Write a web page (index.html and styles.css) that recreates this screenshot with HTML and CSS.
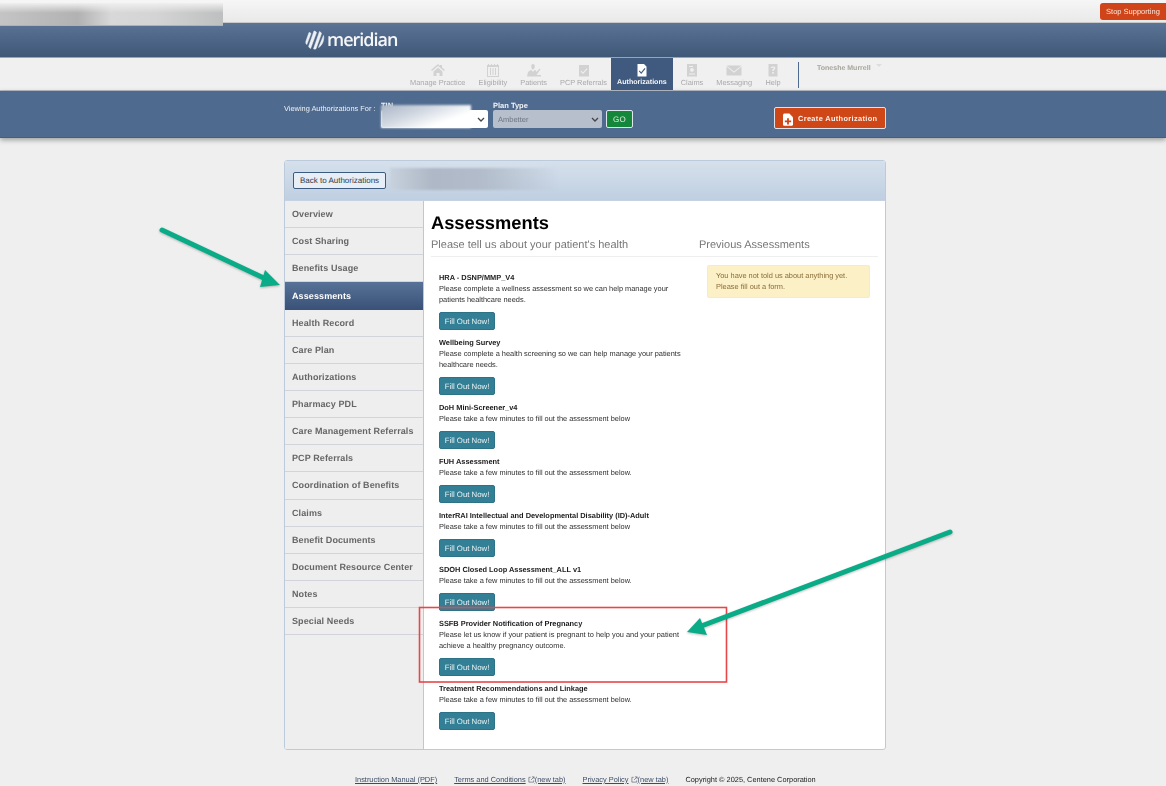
FILE: index.html
```html
<!DOCTYPE html>
<html lang="en">
<head>
<meta charset="utf-8">
<title>Assessments</title>
<link rel="stylesheet" href="styles.css">
</head>
<body>
<div class="page">
  <div class="topbar"><button class="stop">Stop Supporting</button></div>
  <div class="smudge smudge-top"></div>
  <header class="brand">
    <div class="logo">
      <svg class="logo-mark" viewBox="0 0 20 20" aria-hidden="true"><path d="M4 2.500 1 11c-.6 1.800 0 3 .8 3.600L6 3.500C5.500 2.800 4.700 2.400 4 2.500ZM9 1 3.600 16.500c.4 1 1.200 1.700 2 2.100L11.500 2.500C11 1.500 10 1 9 1ZM14.500 1.500 8.500 18.800c1 .5 1.800.4 2.500 0L16.500 3.500c-.4-1-1.100-1.700-2-2ZM18.500 5.500 13.500 17.500c1.500-.6 3.300-2.500 4.500-5.500.8-2.300 1-4.800.5-6.500Z" fill="#eef1f4" stroke="#eef1f4" stroke-width=".5"/></svg>
      <span class="logo-text">meridian</span>
    </div>
  </header>
  <nav class="mainnav">
    <a class="nav-item"><svg class="nav-icon" viewBox="0 0 16 14"><path d="M8 1 1 7l1 1 6-5 6 5 1-1-3-2.500V2h-2v1ZM3.500 8.500 8 4.800l4.500 3.700V13H9.500V10h-3v3h-3Z"/></svg>Manage Practice</a>
    <a class="nav-item"><svg class="nav-icon" viewBox="0 0 16 14"><path d="M3 1h1v1h2V1h1v1h2V1h1v1h2V1h1v1h1v12H2V2h1Zm0 3v9h10V4Zm2 1h1v7H5Zm2.500 0h1v7h-1Zm2.500 0h1v7h-1Z"/></svg>Eligibility</a>
    <a class="nav-item"><svg class="nav-icon" viewBox="0 0 16 14"><path d="M7 1c1 0 1.800.9 1.800 2.300S8 6.500 7 6.500 5.200 4.700 5.200 3.300 6 1 7 1ZM4 7.500l1.500-.5L7 9l1.500-2 1.500.5.500 1.500 3-3.500 1 .8L10.500 12H15v1.500H1L2 9Z"/></svg>Patients</a>
    <a class="nav-item"><svg class="nav-icon" viewBox="0 0 16 14"><path d="M3 2h10v11.500H3Zm1.500 6.500 2.500 2.500 4.500-5-.8-.7L7 9.500 5.300 7.800Z"/></svg>PCP Referrals</a>
    <a class="nav-item nav-active"><svg class="nav-icon" viewBox="0 0 16 14"><path d="M3.500 1H10l2.500 2.500V13.500h-9Zm2 6.500L4.800 8.300 7.200 11 11.500 5.800l-.9-.7-3.400 4.200Z"/></svg>Authorizations</a>
    <a class="nav-item"><svg class="nav-icon" viewBox="0 0 16 14"><path d="M3 1h10v12.500H3Zm2 2v1h4V3Zm0 7.500v1h6v-1ZM8 5A1.900 1.900 0 1 0 8 8.800 1.900 1.900 0 0 0 8 5Z"/></svg>Claims</a>
    <a class="nav-item"><svg class="nav-icon" viewBox="0 0 16 14"><path d="M.5 2.500h15L8 8.500ZM.5 3.500V12.500h15V3.500L8 9.800Z"/></svg>Messaging</a>
    <a class="nav-item"><svg class="nav-icon" viewBox="0 0 16 14"><path d="M3.500 1h9v12.500h-9Zm3.700 8v1.800h1.600V9Zm-1.500-4h1.400c0-.7 1.800-.7 1.800 0 0 .8-1.700 1-1.700 3h1.400c0-1.500 1.700-1.500 1.700-3.100 0-1.900-4.600-1.900-4.600.1Z"/></svg>Help</a>
    <span class="nav-sep"></span>
    <span class="user">Toneshe Murrell<i class="caret"></i></span>
  </nav>
  <div class="subbar">
    <div class="wrap subbar-row">
      <span class="viewing">Viewing Authorizations For :</span>
      <label class="field field-tin"><span class="field-label">TIN</span>
        <select class="select"><option></option></select>
        <span class="smudge smudge-tin"></span>
      </label>
      <label class="field field-plan"><span class="field-label">Plan Type</span>
        <select class="select select-off" disabled><option>Ambetter</option></select>
      </label>
      <button class="go">GO</button>
      <button class="create"><svg class="create-icon" viewBox="0 0 11 14"><path d="M0 1.500 1 .5h6l4 4v8.500l-1 1H1l-1-1Z" fill="#fff"/><path d="M4.500 5.500h2v2.500H9v2H6.500V12.500h-2V10H2V8h2.500Z" fill="#cf4717"/></svg>Create Authorization</button>
    </div>
  </div>
  <main class="wrap card">
    <div class="card-head">
      <button class="back">Back to Authorizations</button>
      <span class="smudge smudge-head"></span>
    </div>
    <div class="card-body">
      <ul class="side">
        <li class="side-item">Overview</li>
        <li class="side-item">Cost Sharing</li>
        <li class="side-item">Benefits Usage</li>
        <li class="side-item side-active">Assessments</li>
        <li class="side-item">Health Record</li>
        <li class="side-item">Care Plan</li>
        <li class="side-item">Authorizations</li>
        <li class="side-item">Pharmacy PDL</li>
        <li class="side-item">Care Management Referrals</li>
        <li class="side-item">PCP Referrals</li>
        <li class="side-item">Coordination of Benefits</li>
        <li class="side-item">Claims</li>
        <li class="side-item">Benefit Documents</li>
        <li class="side-item">Document Resource Center</li>
        <li class="side-item">Notes</li>
        <li class="side-item">Special Needs</li>
      </ul>
      <section class="content">
        <h1 class="title">Assessments</h1>
        <div class="subheads">
          <h2 class="subhead subhead-left">Please tell us about your patient's health</h2>
          <h2 class="subhead">Previous Assessments</h2>
        </div>
        <div class="columns">
          <div class="forms">
            <article class="form-item"><h3 class="form-name">HRA - DSNP/MMP_V4</h3><p class="form-desc">Please complete a wellness assessment so we can help manage your patients healthcare needs.</p><button class="fill">Fill Out Now!</button></article>
            <article class="form-item"><h3 class="form-name">Wellbeing Survey</h3><p class="form-desc">Please complete a health screening so we can help manage your patients healthcare needs.</p><button class="fill">Fill Out Now!</button></article>
            <article class="form-item"><h3 class="form-name">DoH Mini-Screener_v4</h3><p class="form-desc">Please take a few minutes to fill out the assessment below</p><button class="fill">Fill Out Now!</button></article>
            <article class="form-item"><h3 class="form-name">FUH Assessment</h3><p class="form-desc">Please take a few minutes to fill out the assessment below.</p><button class="fill">Fill Out Now!</button></article>
            <article class="form-item"><h3 class="form-name">InterRAI Intellectual and Developmental Disability (ID)-Adult</h3><p class="form-desc">Please take a few minutes to fill out the assessment below</p><button class="fill">Fill Out Now!</button></article>
            <article class="form-item"><h3 class="form-name">SDOH Closed Loop Assessment_ALL v1</h3><p class="form-desc">Please take a few minutes to fill out the assessment below.</p><button class="fill">Fill Out Now!</button></article>
            <article class="form-item"><h3 class="form-name">SSFB Provider Notification of Pregnancy</h3><p class="form-desc">Please let us know if your patient is pregnant to help you and your patient achieve a healthy pregnancy outcome.</p><button class="fill">Fill Out Now!</button></article>
            <article class="form-item"><h3 class="form-name">Treatment Recommendations and Linkage</h3><p class="form-desc">Please take a few minutes to fill out the assessment below.</p><button class="fill">Fill Out Now!</button></article>
          </div>
          <aside class="previous"><div class="alert">You have not told us about anything yet.<br>Please fill out a form.</div></aside>
        </div>
      </section>
    </div>
  </main>
  <footer class="foot">
    <a class="foot-link">Instruction Manual (PDF)</a>
    <span class="foot-ext"><a class="foot-link">Terms and Conditions</a> <svg class="ext" viewBox="0 0 8 8"><path d="M3 1.500H1v5.500h5.500V5M4.500 1h2.500v2.500M7 1 3.500 4.500" fill="none" stroke="#667" stroke-width=".8"/></svg><a class="foot-link">(new tab)</a></span>
    <span class="foot-ext"><a class="foot-link">Privacy Policy</a> <svg class="ext" viewBox="0 0 8 8"><path d="M3 1.500H1v5.500h5.500V5M4.500 1h2.500v2.500M7 1 3.500 4.500" fill="none" stroke="#667" stroke-width=".8"/></svg><a class="foot-link">(new tab)</a></span>
    <span>Copyright © 2025, Centene Corporation</span>
  </footer>
  <svg class="notes" viewBox="0 0 1166 786" aria-hidden="true">
    <rect x="419.500" y="607.500" width="307" height="74.500" fill="none" stroke="#e8474a" stroke-width="1.600"/>
    <g class="arrows">
      <path d="M162 230 268 280" stroke="#0aab87" stroke-width="5" stroke-linecap="round"/>
      <path d="M280 285 265 270 260 287Z" fill="#0aab87"/>
      <path d="M950 532 696 628" stroke="#0aab87" stroke-width="5" stroke-linecap="round"/>
      <path d="M687 632 700 618 707 635Z" fill="#0aab87"/>
    </g>
  </svg>
</div>
</body>
</html>
```

FILE: styles.css
```css
* { box-sizing: border-box; }
html, body { margin: 0; padding: 0; }
body {
  background: #efefef;
  font-family: "Liberation Sans", Arial, sans-serif;
  color: #222;
  overflow: hidden;
  text-rendering: geometricPrecision;
}
button, select { font-family: inherit; text-rendering: inherit; }
.page {
  position: relative;
  width: 1166px;
  height: 786px;
  overflow: hidden;
  filter: blur(0.3px);
}
.wrap { width: 602px; margin-left: 284px; }

.smudge {
  position: absolute;
  filter: blur(1px);
}
.smudge-top {
  left: 0; top: 3px; width: 223px; height: 23px;
  background:
    linear-gradient(#efefef 0, rgba(239,239,239,0) 45%),
    linear-gradient(90deg, #c4c4c4 0, #b2b2b2 35%, #d8d8d8 50%, #d4d4d4 70%, #bebfc0 100%);
  border-bottom: 1px solid #aeb2b8;
  filter: none;
  z-index: 3;
}
.topbar {
  height: 23px;
  display: flex;
  justify-content: flex-end;
  align-items: flex-start;
  padding-top: 3px;
  background: linear-gradient(#f6f6f6, #e9e9e9);
  border-bottom: 1px solid #c9c9c9;
}
.stop {
  width: 66px; height: 17px;
  border: 0;
  border-radius: 3px 0 0 3px;
  padding: 0;
  background: #cf4418;
  color: #fbe4da;
  font-size: 7.500px;
  white-space: nowrap;
}
.brand {
  height: 34px;
  background: linear-gradient(#5b7495, #3f5878);
  padding-left: 305px;
  display: flex;
  align-items: center;
}
.logo { display: flex; align-items: center; gap: 2px; }
.logo-mark { width: 20px; height: 20px; display: block; }
.logo-text {
  color: #f4f6f8;
  font-family: "Open Sans", sans-serif;
  font-size: 18px;
  font-weight: 600;
  line-height: 20px;
  letter-spacing: -1px;
}
.mainnav {
  height: 34px;
  background: #f0f0f0;
  border-top: 1px solid #94a6bb;
  border-bottom: 1px solid #b5bdc7;
  padding-left: 403.500px;
  display: flex;
  align-items: stretch;
}
.nav-item {
  display: flex;
  flex-direction: column;
  align-items: center;
  justify-content: flex-start;
  gap: 1px;
  padding: 5px 6.500px 0;
  color: #a9a9a9;
  font-size: 7.400px;
  line-height: 9px;
  white-space: nowrap;
}
.nav-icon { width: 16px; height: 14px; fill: #d2d2d2; display: block; }
.nav-active {
  background: #3f5a7e;
  color: #f4f6f9;
  font-weight: bold;
  padding: 5px 6px 0;
  margin: 0 1.500px 0 -2.500px;
  font-size: 7.100px;
}
.nav-active .nav-icon { fill: #fff; }
.nav-sep {
  width: 1px;
  height: 26px;
  margin: 4px 0 0 10.500px;
  background: #4f6a8f;
}
.user {
  margin: 6px 0 0 18px;
  color: #a8a49c;
  font-size: 7px;
  line-height: 9px;
  font-weight: bold;
  white-space: nowrap;
}
.caret {
  display: inline-block;
  margin: 0 0 3px 5px;
  border: 3px solid transparent;
  border-top-color: #ddd;
  border-bottom: 0;
}
.subbar {
  height: 47px;
  background: #4f6a8f;
  box-shadow: 0 2px 5px rgba(0,0,0,.35);
  border-bottom: 1px solid #445e82;
}
.subbar-row {
  height: 47px;
  display: flex;
  align-items: flex-start;
  color: #fff;
}
.viewing {
  font-size: 7.400px;
  line-height: 10px;
  margin-top: 13px;
  width: 97px;
  white-space: nowrap;
  color: #eef1f5;
}
.field { position: relative; display: flex; flex-direction: column; margin-top: 9px; }
.field-label { font-size: 7.500px; line-height: 12px; height: 10px; font-weight: bold; color: #f1f3f6; }
.field-tin { width: 107px; }
.field-plan { width: 109px; margin-left: 5px; }
.select {
  appearance: none;
  width: 100%;
  height: 18px;
  border: 0;
  border-radius: 2px;
  background: #fff url("data:image/svg+xml,%3Csvg xmlns='http://www.w3.org/2000/svg' width='8' height='5'%3E%3Cpath d='M1 1l3 3 3-3' fill='none' stroke='%23444' stroke-width='1.300'/%3E%3C/svg%3E") no-repeat right 3px center;
  font-size: 7.500px;
  padding: 0 0 0 5px;
  margin: 0;
}
.select-off { background-color: #b6bfcb; color: #6d7682; opacity: 1; }
.smudge-tin {
  left: 0; top: 5px; width: 90px; height: 23px;
  background: linear-gradient(160deg, #aab6c6 0, #cfd6e0 35%, #fff 72%);
}
.go {
  width: 27px; height: 18px;
  margin: 19px 0 0 4px;
  padding: 0;
  background: #15873a;
  color: #e2f0e4;
  border: 1.500px solid #dfe7ee;
  border-radius: 2px;
  font-size: 8px;
  letter-spacing: .4px;
}
.create {
  display: flex;
  align-items: center;
  gap: 5px;
  width: 112px; height: 22px;
  margin: 16px 0 0 auto;
  padding: 0 0 0 8px;
  background: #cf4717;
  color: #fbeee8;
  border: 1px solid #dbe3ec;
  border-radius: 2px;
  font-size: 7.400px;
  font-weight: bold;
  letter-spacing: .35px;
  white-space: nowrap;
}
.create-icon { width: 10px; height: 13px; margin-top: 2px; flex: none; }
.card {
  margin-top: 22px;
  height: 590px;
  border: 1px solid #bccbdc;
  border-radius: 3px;
  overflow: hidden;
  display: flex;
  flex-direction: column;
  background: #fff;
}
.card-head {
  position: relative;
  height: 40px;
  flex: none;
  padding: 11px 0 0 8px;
  background: linear-gradient(#d6e0ec, #bfcfe1);
  border-bottom: 1px solid #c5d2e2;
}
.back {
  display: block;
  width: 93px; height: 17px;
  padding: 0;
  background: #e8eef6;
  border: 1px solid #3d5a80;
  border-radius: 2px;
  color: #2f3d50;
  font-size: 8px;
  white-space: nowrap;
}
.smudge-head {
  left: 105px; top: 7px; width: 168px; height: 22px;
  background: linear-gradient(90deg, #c8d2de 0, #aeb8c6 25%, #b2bcca 55%, rgba(198,209,222,0) 100%);
}
.card-body { flex: 1; display: flex; min-height: 0; }
.side {
  width: 139px;
  flex: none;
  margin: 0;
  padding: 0;
  list-style: none;
  background: #eeeeee;
  border-right: 1px solid #b9c8da;
}
.side-item {
  height: 27.070px;
  padding-left: 7px;
  border-bottom: 1px solid #d1d5db;
  color: #666;
  font-size: 9px;
  font-weight: bold;
  line-height: 26px;
  letter-spacing: .1px;
  white-space: nowrap;
}
.side-active {
  height: 27.900px;
  line-height: 28px;
  background: linear-gradient(#587297, #3a5278);
  color: #fff;
  border-bottom-color: #3a5278;
}
.content { flex: 1; padding: 9px 7px 0 7px; min-width: 0; }
.title {
  margin: 0;
  color: #000;
  font-size: 18.300px;
  line-height: 26px;
  font-weight: bold;
}
.subheads {
  display: flex;
  height: 21px;
  border-bottom: 1px solid #eeeeee;
}
.subhead {
  margin: 0;
  color: #777;
  font-size: 11px;
  line-height: 18px;
  font-weight: normal;
  white-space: nowrap;
}
.subhead-left { width: 268px; }
.columns { display: flex; }
.forms { width: 268px; padding: 15px 15px 0 8px; flex: none; }
.form-item { padding-bottom: 7px; }
.form-name {
  margin: 0;
  color: #1c1c1c;
  font-size: 7.400px;
  line-height: 11px;
  font-weight: bold;
}
.form-desc {
  margin: 0 0 7px;
  color: #2f2f2f;
  font-size: 7.400px;
  line-height: 11px;
}
.fill {
  display: block;
  width: 56px; height: 18px;
  padding: 0;
  background: #337f95;
  color: #eaf3f5;
  border: 1px solid #2d7387;
  border-radius: 2px;
  font-size: 7.800px;
  white-space: nowrap;
}
.previous { flex: 1; padding: 8px 8px 0 8px; }
.alert {
  padding: 4px 8px 5px;
  background: #fcf0c6;
  border: 1px solid #f8ebc4;
  border-radius: 2px;
  color: #8a6d3b;
  font-size: 7.400px;
  line-height: 11px;
}
.foot {
  height: 36px;
  display: flex;
  justify-content: flex-start;
  padding: 25px 0 0 355px;
  gap: 17px;
  color: #222;
  font-size: 7.400px;
  line-height: 10px;
  white-space: nowrap;
}
.foot-link { color: #3d4c66; text-decoration: underline; }
.ext { width: 7px; height: 7px; display: inline-block; vertical-align: -1px; }
.notes {
  position: absolute;
  left: 0; top: 0;
  width: 1166px; height: 786px;
  pointer-events: none;
}
.arrows { filter: drop-shadow(0 1px 1px rgba(0,0,0,.25)); }
```
